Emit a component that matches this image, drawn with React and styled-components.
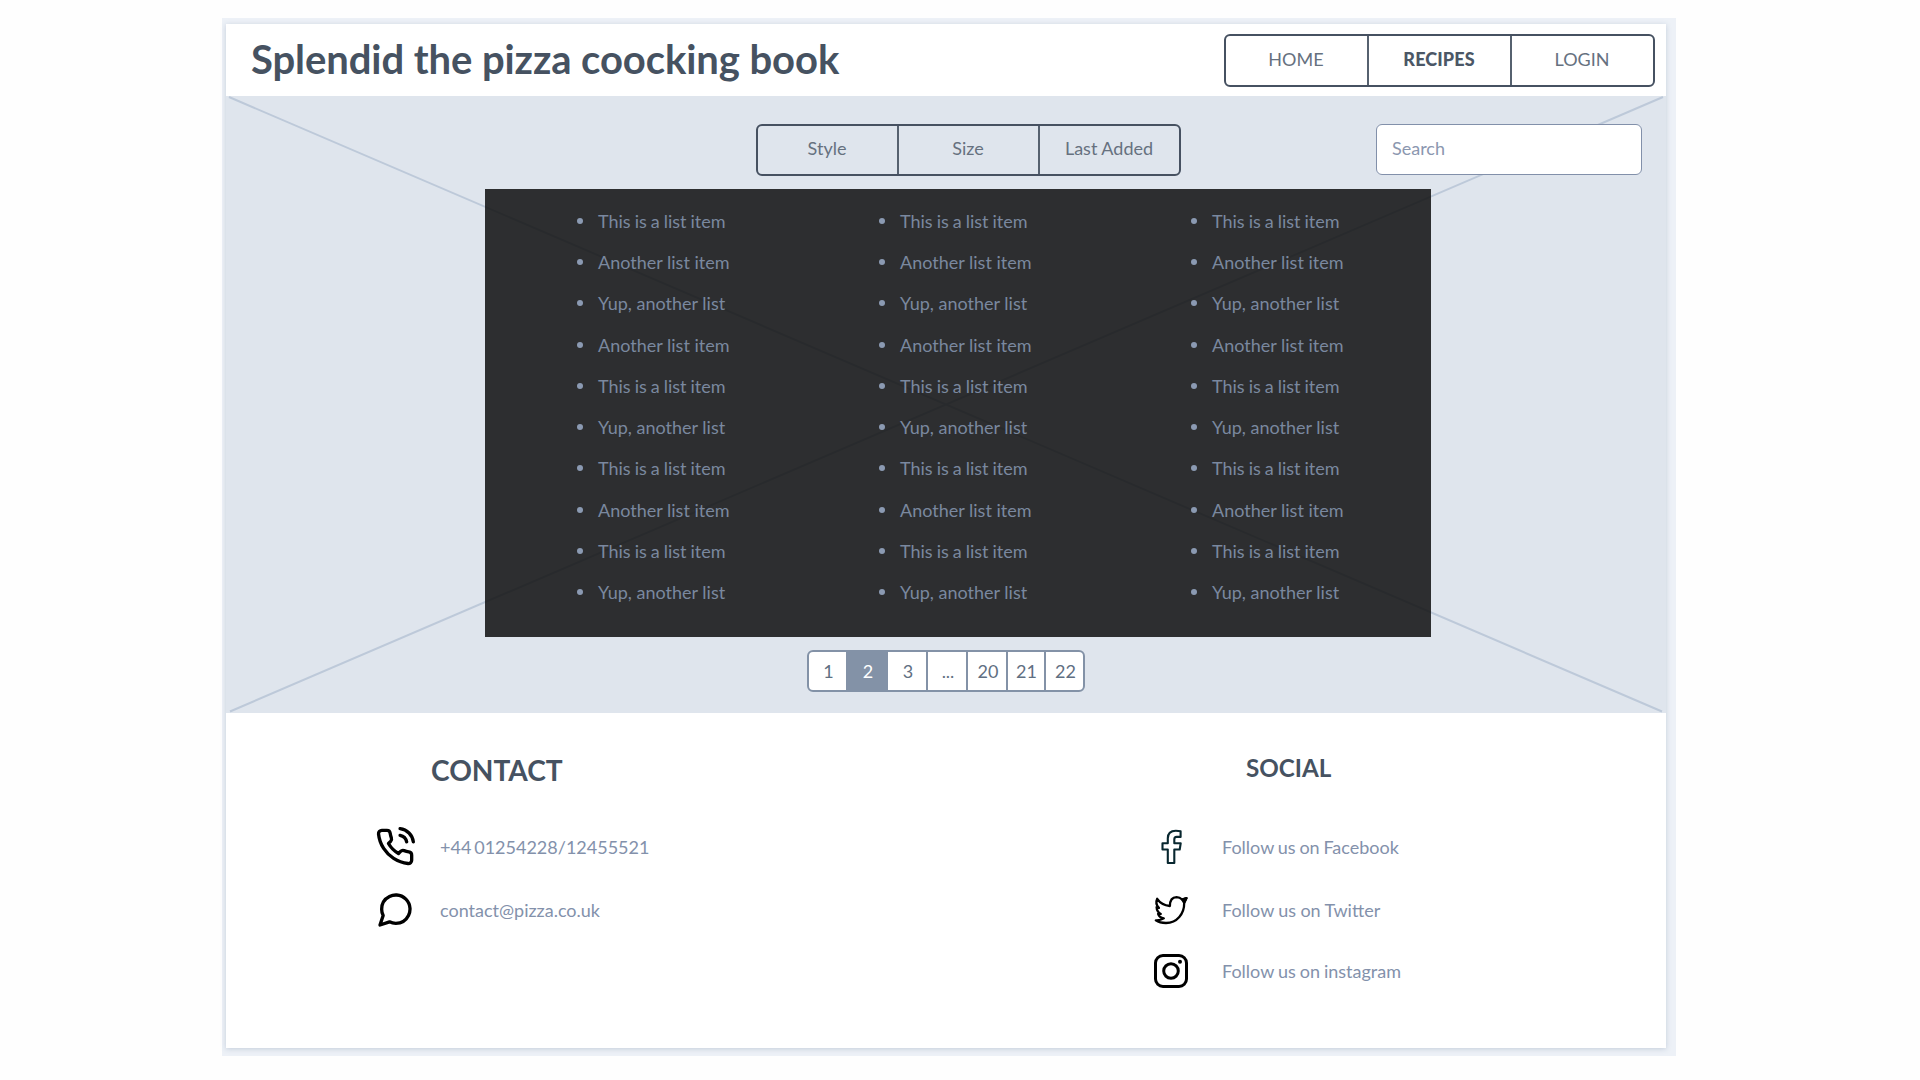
import React from 'react';
import styled, { createGlobalStyle } from 'styled-components';

const GlobalStyle = createGlobalStyle`
  *, *::before, *::after { box-sizing: border-box; }
  body {
    margin: 0;
    background: #fefefe;
    font-family: Lato, "Liberation Sans", sans-serif;
    font-size: 18px;
    color: #8391ab;
    text-rendering: optimizeLegibility;
  }
  ul { list-style: none; margin: 0; padding: 0; }
  h1, h2 { margin: 0; font-weight: 700; color: #465261; white-space: nowrap; }
`;

const Frame = styled.div`
  width: 1454px;
  height: 1038px;
  margin: 18px 0 0 222px;
  padding: 6px 10px 8px 4px;
  background: #edf1f7;
`;

const Page = styled.div`
  display: flex;
  flex-direction: column;
  width: 1440px;
  height: 1024px;
  background: #fff;
  box-shadow: 0 1px 5px rgba(110, 130, 160, 0.32);
`;

const Header = styled.header`
  display: flex;
  justify-content: space-between;
  align-items: flex-start;
  height: 72px;
  padding: 10px 11px 0 25px;
`;

const Title = styled.h1`
  padding-top: 1px;
  font-size: 40px;
  line-height: 48px;
  letter-spacing: -0.08px;
`;

const Segments = styled.nav`
  display: grid;
  grid-template-columns: ${(p) => p.$columns};
  width: ${(p) => p.$width}px;
  height: ${(p) => p.$height}px;
  border: 2px solid #465161;
  border-radius: 6px;
`;

const Segment = styled.a`
  display: flex;
  align-items: center;
  justify-content: center;
  padding: 0 1px 4px 0;
  color: #66717f;
  font-weight: ${(p) => (p.$active ? 900 : 400)};
  ${(p) => p.$active && 'color: #4b5766; letter-spacing: 0.1px;'}
  & + & { border-left: 2px solid #56616f; }
`;

const Hero = styled.main`
  display: grid;
  grid-template-rows: 65px 448px 1fr;
  height: 617px;
  padding-top: 28px;
  background: #dfe5ed;
  position: relative;
  isolation: isolate;
`;

const Cross = styled.svg`
  position: absolute;
  inset: 0;
  z-index: -1;
`;

const Toolbar = styled.div`
  display: grid;
  grid-template-columns: 530px 1fr 266px;
  padding-right: 24px;
`;

const Search = styled.input`
  grid-column: 3;
  height: 51px;
  padding: 0 15px 4px;
  border: 1px solid #8290aa;
  border-radius: 6px;
  background: #fff;
  font: inherit;
  outline: none;
  &::placeholder { color: #8b97af; opacity: 1; }
`;

const Panel = styled.section`
  display: grid;
  grid-template-columns: 302px 312px 1fr;
  width: 946px;
  margin-left: 259px;
  padding: 11.2px 0 0 91.5px;
  background: rgba(14, 14, 14, 0.85);
`;

const ListItem = styled.li`
  display: flex;
  align-items: center;
  height: 41.25px;
  color: #7a889f;
  white-space: nowrap;
  word-spacing: ${(p) => (p.$tight ? -0.6 : 0)}px;
  &::before {
    content: '';
    width: 6px;
    height: 6px;
    margin-right: 15.5px;
    border-radius: 50%;
    background: #8b9ab2;
  }
`;

const Pagination = styled.nav`
  display: flex;
  width: 278px;
  height: 42px;
  margin: 13px 0 0 581px;
  border: 2px solid #8392a7;
  border-radius: 6px;
  background: #fff;
  overflow: hidden;
`;

const PageNumber = styled.a`
  display: flex;
  align-items: center;
  justify-content: center;
  width: ${(p) => p.$width}px;
  padding-left: ${(p) => (p.$width === 38 ? 1 : 2)}px;
  color: ${(p) => (p.$active ? '#fff' : '#5f6f82')};
  background: ${(p) => (p.$active ? '#8392a7' : 'transparent')};
  & + & { border-left: 2px solid #8392a7; }
`;

const Footer = styled.footer`
  display: grid;
  grid-template-columns: 777px 1fr;
  padding: 36px 0 0 149px;
`;

const Heading = styled.h2`
  font-size: ${(p) => p.$size}px;
  line-height: ${(p) => p.$line}px;
  height: 67px;
  padding-left: ${(p) => p.$indent}px;
`;

const Entries = styled.div`
  display: grid;
  grid-template-rows: 62px 64px 58px;
`;

const Entry = styled.div`
  display: grid;
  grid-template-columns: ${(p) => p.$iconCell}px 1fr;
  align-items: center;
  white-space: nowrap;
  word-spacing: ${(p) => p.$spacing || 0}px;
`;

const Icon = styled.svg`
  display: block;
  width: 40px;
  height: 40px;
  fill: none;
  stroke: ${(p) => p.$color || '#000'};
  stroke-linecap: round;
  stroke-linejoin: round;
  overflow: visible;
`;

const THIS = 'This is a list item';
const ANOTHER = 'Another list item';
const YUP = 'Yup, another list';
const ITEMS = [THIS, ANOTHER, YUP, ANOTHER, THIS, YUP, THIS, ANOTHER, THIS, YUP];
const PAGES = [['1', 37], ['2', 40], ['3', 40], ['...', 40], ['20', 40], ['21', 38], ['22', 39]];

const PhoneIcon = () => (
  <Icon viewBox="0 0 24 24" strokeWidth="2">
    <path d="M15.05 5A5 5 0 0 1 19 8.95M15.05 1A9 9 0 0 1 23 8.94M22 16.92v3a2 2 0 0 1-2.18 2 19.79 19.79 0 0 1-8.63-3.07 19.5 19.5 0 0 1-6-6A19.79 19.79 0 0 1 2.12 4.18 2 2 0 0 1 4.11 2h3a2 2 0 0 1 2 1.72c.127.96.361 1.903.7 2.81a2 2 0 0 1-.45 2.11L8.09 9.91a16 16 0 0 0 6 6l1.27-1.27a2 2 0 0 1 2.11-.45c.907.339 1.85.573 2.81.7A2 2 0 0 1 22 16.92z" />
  </Icon>
);

const ChatIcon = () => (
  <Icon viewBox="0 0 24 24" strokeWidth="2">
    <path d="M21 11.5a8.38 8.38 0 0 1-.9 3.8 8.5 8.5 0 0 1-7.6 4.7 8.38 8.38 0 0 1-3.8-.9L3 21l1.9-5.7a8.38 8.38 0 0 1-.9-3.8 8.5 8.5 0 0 1 4.7-7.6 8.38 8.38 0 0 1 3.8-.9h.5a8.48 8.48 0 0 1 8 8v.5z" />
  </Icon>
);

const FacebookIcon = () => (
  <Icon viewBox="-.8 0 40 40" strokeWidth="2.1" $color="#08272f">
    <path d="M15 36V22.500H9.700v-6.200H15v-5C15 6 18 3.700 23 3.700c2 0 3.400.2 4.800.6v5.600h-4c-1.700 0-2.300.8-2.300 2.500v3.900h6.400l-1 6.200h-5.400V36z" />
  </Icon>
);

const TwitterIcon = () => (
  <Icon viewBox="0 -.8 40 40" strokeWidth="2.3">
    <path d="M5.200 8c2.800 4.200 7 6.600 12.700 7.200 0-5.300 2.300-8.800 6.700-8.900 2.500 0 4.100 1 5.500 2.400l4.400-1.400-2.300 4.700C32.400 23 25 32.200 14 32.200c-4.500 0-7.700-1-10.200-2.700 3.200.2 5.700-.4 8-1.900-3-.5-4.900-2-5.700-4.500h2.700C6 21.500 4.700 19.300 4.600 16.400l2.300.7C4.300 14.500 3.800 11 5.200 8z" />
    <path d="m30.100 8.700 4.400-1.400-2.300 4.700z" fill="#000" />
  </Icon>
);

const InstagramIcon = () => (
  <Icon viewBox="1 0 40 40" strokeWidth="3">
    <rect x="4.500" y="4.500" width="31" height="31" rx="7.500" />
    <circle cx="20" cy="20" r="7.300" />
    <circle cx="29" cy="10.800" r="2" fill="#000" stroke="none" />
  </Icon>
);

export default function App() {
  return (
    <>
      <GlobalStyle />
      <Frame>
        <Page>
          <Header>
            <Title>Splendid the pizza coocking book</Title>
            <Segments $width={431} $height={53} $columns="141px 143px 1fr">
              <Segment>HOME</Segment>
              <Segment $active>RECIPES</Segment>
              <Segment>LOGIN</Segment>
            </Segments>
          </Header>
          <Hero>
            <Cross width="1440" height="617" stroke="#bdc9d9" strokeWidth="2">
              <path d="M3 1 1436 615.500M1437 1 4 615.500" />
            </Cross>
            <Toolbar>
              <span />
              <Segments $width={425} $height={52} $columns="139px 141px 1fr">
                <Segment>Style</Segment>
                <Segment>Size</Segment>
                <Segment>Last Added</Segment>
              </Segments>
              <Search placeholder="Search" />
            </Toolbar>
            <Panel>
              {[0, 1, 2].map((column) => (
                <ul key={column}>
                  {ITEMS.map((text, i) => (
                    <ListItem key={i} $tight={text === THIS}>{text}</ListItem>
                  ))}
                </ul>
              ))}
            </Panel>
            <Pagination>
              {PAGES.map(([label, width]) => (
                <PageNumber key={label} $width={width} $active={label === '2'}>
                  {label}
                </PageNumber>
              ))}
            </Pagination>
          </Hero>
          <Footer>
            <section>
              <Heading $size={28.1} $line={42} $indent={56}>CONTACT</Heading>
              <Entries>
                <Entry $iconCell={65} $spacing={-1.7}>
                  <PhoneIcon />
                  <span>+44 01254228/12455521</span>
                </Entry>
                <Entry $iconCell={65}>
                  <ChatIcon />
                  <span>contact@pizza.co.uk</span>
                </Entry>
              </Entries>
            </section>
            <section>
              <Heading $size={24.2} $line={38} $indent={94}>SOCIAL</Heading>
              <Entries>
                <Entry $iconCell={70} $spacing={-0.8}>
                  <FacebookIcon />
                  <span>Follow us on Facebook</span>
                </Entry>
                <Entry $iconCell={70} $spacing={-0.3}>
                  <TwitterIcon />
                  <span>Follow us on Twitter</span>
                </Entry>
                <Entry $iconCell={70} $spacing={-0.65}>
                  <InstagramIcon />
                  <span>Follow us on instagram</span>
                </Entry>
              </Entries>
            </section>
          </Footer>
        </Page>
      </Frame>
    </>
  );
}
